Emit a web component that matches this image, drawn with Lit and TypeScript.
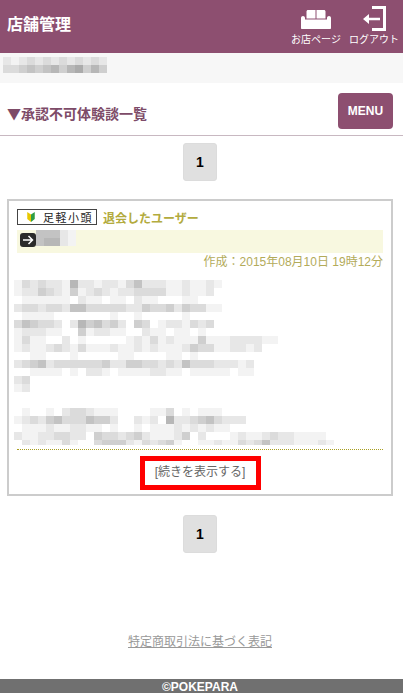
import { LitElement, html, css, svg } from 'lit';
import { customElement } from 'lit/decorators.js';

// pixelated areas of the reference, one digit per cell: 0 is white, 9 is darkest
const BODY_ROWS = [
  '132322162212213522211211210',
  '122432141232122333311211200',
  '011111102110110211000110000',
  '233233255333332243342433110',
  '011110000000100100000100000',
  '3543320264534204301221323',
  '1222110041221100211011010',
  '1311002010000012131211141112222110',
  '1211232131112112121112433112212000',
  '0011000100000110000110100000',
  '23452333333422443323253332221200',
  '001111010221011112211011111011',
  '23',
  '12',
  '',
  '',
  '010010233211100001130101110000',
  '123245333544200212062234532220',
  '011121122110100101112121211000',
  '2112233220433234211124020001211232211110',
  '0212113100344421323410011211323522211121',
];
const SHOP_ROWS = ['2123232323232', '3345456467464'];
const USER_ROWS = ['55521', '56621'];

const cellColor = (d: string) => {
  const g = 255 - Number(d) * 12;
  return `rgb(${g},${g},${g})`;
};

const mosaic = (rows: string[], cell: number) => {
  const width = Math.max(...rows.map((r) => r.length)) * cell;
  return svg`<svg width=${width} height=${rows.length * cell} shape-rendering="crispEdges">
    ${rows.map((row, y) =>
      [...row].map(
        (d, x) =>
          svg`<rect x=${x * cell} y=${y * cell} width=${cell} height=${cell} fill=${cellColor(d)} />`
      )
    )}
  </svg>`;
};

@customElement('app-root')
export class AppRoot extends LitElement {
  static styles = css`
    :host {
      display: flex;
      flex-direction: column;
      min-height: 693px;
      background: #fff;
      font-family: 'Liberation Sans', 'Noto Sans CJK JP', sans-serif;
    }
    .top {
      height: 53px;
      background: #8d4f70;
      color: #fff;
      display: flex;
      align-items: flex-start;
      padding: 5px 4px 0 7px;
      box-sizing: border-box;
    }
    .top h1 {
      margin: 6px auto 0 0;
      font-size: 16px;
      font-weight: bold;
    }
    .top-link {
      width: 50px;
      margin-left: 8px;
      display: flex;
      flex-direction: column;
      align-items: center;
      font-size: 10px;
      line-height: 12px;
      color: #fff;
      white-space: nowrap;
    }
    .top-link svg {
      display: block;
      height: 28px;
      margin-bottom: 1px;
    }
    .shop {
      height: 30px;
      background: #f7f7f7;
      padding: 4px 0 0 3px;
      box-sizing: border-box;
    }
    .shop svg, .user svg {
      display: block;
    }
    .title {
      height: 53px;
      box-sizing: border-box;
      border-bottom: 1px solid #c8b8c1;
      display: flex;
      align-items: center;
      justify-content: space-between;
      padding: 4px 10px 0 7px;
    }
    .title h2 {
      margin: 3px 0 0;
      font-family: 'Noto Sans CJK JP', 'Liberation Sans', sans-serif;
      font-size: 14px;
      line-height: 18px;
      font-weight: bold;
      color: #7d4b68;
    }
    .menu {
      width: 55px;
      height: 36px;
      border-radius: 4px;
      background: #8d4f70;
      color: #fff;
      font-size: 12px;
      font-weight: bold;
      display: flex;
      align-items: center;
      justify-content: center;
      box-sizing: border-box;
    }
    .pager {
      display: flex;
      justify-content: center;
      padding-right: 3px;
    }
    .pager span {
      width: 34px;
      height: 38px;
      box-sizing: border-box;
      border-radius: 3px;
      background: #e0e0e0;
      border: 1px solid #dcdcdc;
      color: #000;
      font-size: 14px;
      font-weight: bold;
      display: flex;
      align-items: center;
      justify-content: center;
    }
    .pager.first {
      margin-top: 7px;
    }
    .card {
      margin: 18px 10px 0 7px;
      height: 297px;
      box-sizing: border-box;
      border: 2px solid #ccc;
      padding: 8px 8px 0 8px;
    }
    .who {
      display: flex;
      align-items: center;
      height: 16px;
      gap: 6px;
    }
    .rank {
      width: 80px;
      height: 16px;
      box-sizing: border-box;
      border: 1px solid #444;
      display: flex;
      align-items: center;
      padding-left: 9px;
      gap: 8px;
      font-family: 'Noto Sans CJK JP', serif;
      font-size: 11px;
      letter-spacing: 1.500px;
      color: #222;
      white-space: nowrap;
    }
    .rank svg {
      flex: none;
    }
    .name {
      font-size: 12px;
      font-weight: bold;
      color: #b3ab3e;
    }
    .user {
      margin-top: 5px;
      height: 23px;
      background: #f8f8e0;
      display: flex;
      align-items: flex-start;
      padding-left: 3px;
    }
    .user .arrow {
      margin-top: 3px;
    }
    .date {
      text-align: right;
      font-size: 12px;
      line-height: 16px;
      margin-top: 1px;
      color: #b3ab5a;
    }
    .body {
      margin: 10px 0 0 -3px;
      height: 165px;
      overflow: hidden;
    }
    .body svg {
      display: block;
    }
    .rule {
      border-top: 1px dotted #a89e20;
      margin-top: 4px;
    }
    .more {
      display: block;
      width: 121px;
      height: 34px;
      box-sizing: border-box;
      margin: 6px auto 0;
      border: 5px solid #f00;
      text-align: center;
      font-size: 12px;
      line-height: 23px;
      color: #666;
    }
    .pager.last {
      margin-top: 19px;
    }
    .legal {
      margin-top: auto;
      padding: 0 3px 29px 0;
      text-align: center;
      font-size: 12px;
      line-height: 16px;
      color: #999;
    }
    .legal span {
      text-decoration: underline;
    }
    .foot {
      height: 14px;
      padding-right: 3px;
      background: #707070;
      color: #fff;
      font-size: 12px;
      font-weight: bold;
      line-height: 16px;
      text-align: center;
      overflow: hidden;
    }
  `;

  render() {
    return html`
      <div class="top">
        <h1>店舗管理</h1>
        <div class="top-link">
          <svg width="32" height="28" viewBox="0 0 32 28" fill="#fff">
            <path d="M6.500 6.500c0-.9.700-1.500 1.500-1.500h7.500v8.500h-9zM16.500 5H24c.8 0 1.500.6 1.500 1.500v7h-9z" />
            <path d="M1 13c0-1.200.9-2 2-2s2 .8 2 2v1.500h22V13c0-1.200.9-2 2-2s2 .8 2 2v10c0 .6-.4 1-1 1H2c-.6 0-1-.4-1-1z" />
          </svg>
          <span>お店ページ</span>
        </div>
        <div class="top-link">
          <svg width="26" height="28" viewBox="0 0 26 28" fill="#fff">
            <path d="M11 1h14v25H11v-3h11V4H11z" />
            <path d="M2 14 8 9v3.700h11v2.600H8V19z" />
          </svg>
          <span>ログアウト</span>
        </div>
      </div>
      <div class="shop">${mosaic(SHOP_ROWS, 8)}</div>
      <div class="title">
        <h2>▼承認不可体験談一覧</h2>
        <div class="menu">MENU</div>
      </div>
      <div class="pager first"><span>1</span></div>
      <div class="card">
        <div class="who">
          <div class="rank">
            <svg width="8" height="10" viewBox="0 0 9 12">
              <path d="M0 0 4.500 3V12L0 8.500z" fill="#e8c800" />
              <path d="M9 0 4.500 3V12L9 8.500z" fill="#2f9e44" />
            </svg>
            <span>足軽小頭</span>
          </div>
          <span class="name">退会したユーザー</span>
        </div>
        <div class="user">
          <svg class="arrow" width="16" height="14" viewBox="0 0 16 14">
            <rect width="16" height="14" rx="3" fill="#2a2a2a" />
            <path d="M3 7h9M8.500 3l4 4-4 4" fill="none" stroke="#fff" stroke-width="1.500" />
          </svg>
          ${mosaic(USER_ROWS, 8)}
        </div>
        <div class="date">作成：2015年08月10日 19時12分</div>
        <div class="body">${mosaic(BODY_ROWS, 8)}</div>
        <div class="rule"></div>
        <div class="more">[続きを表示する]</div>
      </div>
      <div class="pager last"><span>1</span></div>
      <div class="legal"><span>特定商取引法に基づく表記</span></div>
      <div class="foot">©POKEPARA</div>
    `;
  }
}
